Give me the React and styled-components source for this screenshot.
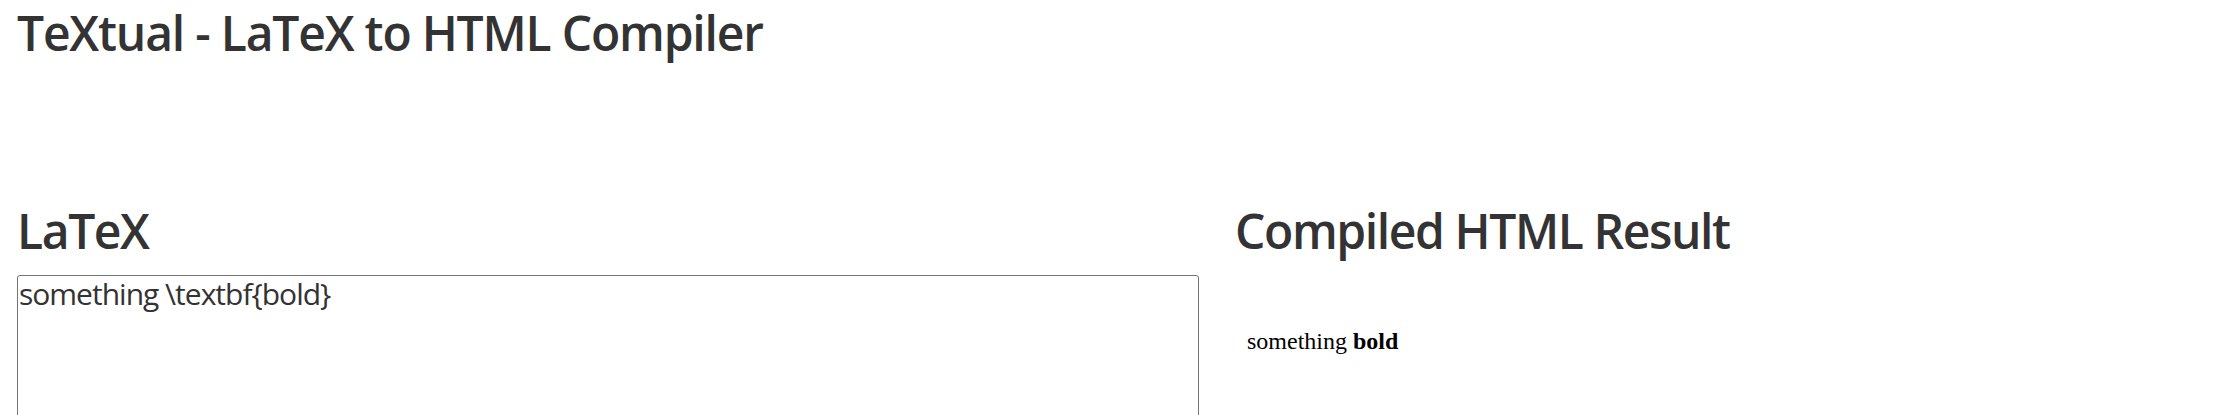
import React from "react"
import styled, { createGlobalStyle } from "styled-components"

const GlobalStyle = createGlobalStyle`
  html, body {
    margin: 0;
    padding: 0;
    background: #fff;
  }
  body {
    font-family: "Open Sans", "Noto Sans", sans-serif;
    color: #333;
  }
`

const Page = styled.main`
  padding: 0 0 0 17px;
`

const Title = styled.h1`
  margin: 4px 0 0 0;
  font-size: 48px;
  font-weight: 600;
  line-height: 1.2;
  letter-spacing: -1.2px;
  color: #333;
`

const Columns = styled.section`
  display: grid;
  grid-template-columns: 1182px 1fr;
  column-gap: 36px;
  margin-top: 140px;
`

const Column = styled.div`
  display: flex;
  flex-direction: column;
`

const Heading = styled.h2`
  margin: 0 0 16px 0;
  font-size: 48px;
  font-weight: 600;
  line-height: 1.2;
  letter-spacing: -1.4px;
  color: #333;
`

const Editor = styled.textarea`
  box-sizing: border-box;
  width: 100%;
  height: 300px;
  margin: 0;
  padding: 0 1px;
  border: 1px solid #767676;
  border-radius: 3px;
  font-family: "Open Sans", "Noto Sans", sans-serif;
  font-size: 30px;
  line-height: 1.2;
  letter-spacing: -1px;
  color: #333;
  resize: none;
  outline: none;
`

const Result = styled.div`
  padding: 53px 12px 0 12px;
  font-family: "Liberation Serif", "Times New Roman", serif;
  font-size: 24px;
  color: #000;
`

const App = () => {
  const source = "something \\textbf{bold}"
  return (
    <>
      <GlobalStyle />
      <Page>
        <Title>TeXtual - LaTeX to HTML Compiler</Title>
        <Columns>
          <Column>
            <Heading>LaTeX</Heading>
            <Editor defaultValue={source} spellCheck={false} />
          </Column>
          <Column>
            <Heading>Compiled HTML Result</Heading>
            <Result>
              something <b>bold</b>
            </Result>
          </Column>
        </Columns>
      </Page>
    </>
  )
}

export default App
